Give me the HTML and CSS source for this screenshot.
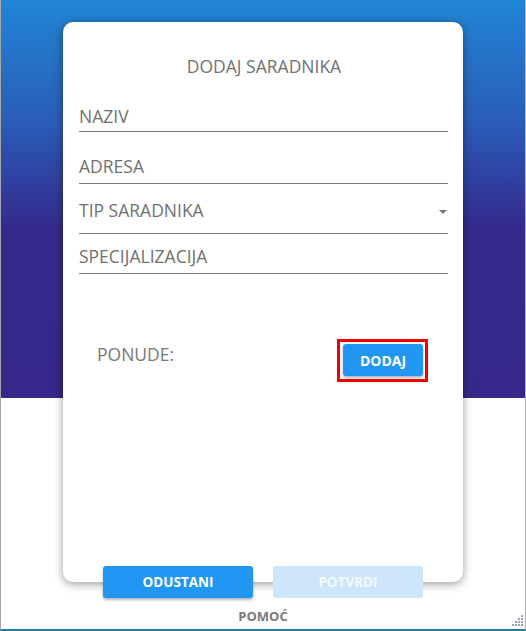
FILE: index.html
```html
<!DOCTYPE html>
<html>
<head>
<meta charset="utf-8">
<link rel="stylesheet" href="styles.css">
</head>
<body>
<div class="window">
  <div class="card">
    <div class="title">DODAJ SARADNIKA</div>
    <div class="field f1">NAZIV</div>
    <div class="field f2">ADRESA</div>
    <div class="field f3 select"><span>TIP SARADNIKA</span><span class="caret"></span></div>
    <div class="field f4">SPECIJALIZACIJA</div>
    <div class="offers">
      <span class="offers-label">PONUDE:</span>
      <div class="highlight"><button class="btn btn-primary btn-small">DODAJ</button></div>
    </div>
  </div>
  <div class="actions">
    <button class="btn btn-primary btn-wide">ODUSTANI</button>
    <button class="btn btn-disabled btn-wide">POTVRDI</button>
  </div>
  <div class="help">POMOĆ</div>
  <svg class="grip" width="12" height="12" viewBox="0 0 12 12">
    <g fill="#9aa3b5">
      <rect x="10" y="0" width="2" height="2"/>
      <rect x="7" y="3" width="2" height="2"/><rect x="10" y="3" width="2" height="2"/>
      <rect x="4" y="6" width="2" height="2"/><rect x="7" y="6" width="2" height="2"/><rect x="10" y="6" width="2" height="2"/>
      <rect x="1" y="9" width="2" height="2"/><rect x="4" y="9" width="2" height="2"/><rect x="7" y="9" width="2" height="2"/><rect x="10" y="9" width="2" height="2"/>
    </g>
  </svg>
</div>
</body>
</html>
```
FILE: styles.css
```css
* { box-sizing: border-box; }
html, body { margin: 0; padding: 0; }
body { font-family: "Open Sans", "Liberation Sans", sans-serif; }

.window {
  position: relative;
  width: 526px;
  height: 631px;
  border-left: 1px solid #a6a6a6;
  border-right: 1px solid #b9b9b9;
  border-bottom: 2px solid #1f7ea9;
  background: #fff linear-gradient(to bottom, #2185d4 0px, #2a5db9 120px, #35298c 230px, #35288a 398px) no-repeat top left / 100% 398px;
  overflow: hidden;
}

.card {
  margin: 22px 0 0 62px;
  width: 400px;
  height: 560px;
  background: #fff;
  border-radius: 10px;
  box-shadow: 0 2px 10px rgba(0, 0, 0, 0.4);
  padding: 34px 15px 0 16px;
  color: #6f6f6f;
}

.title {
  text-align: center;
  font-size: 17.5px;
  line-height: 20px;
  color: #727272;
  padding-left: 1px;
}

.field {
  font-size: 17.5px;
  line-height: 20px;
  color: #707070;
  border-bottom: 1px solid #7a7a7a;
}
.f1 { margin-top: 30px; padding-bottom: 5px; }
.f2 { margin-top: 24px; padding-bottom: 7px; }
.f3 { margin-top: 16px; padding-bottom: 13px; }
.f4 { margin-top: 12px; padding-bottom: 7px; }

.select {
  display: flex;
  justify-content: space-between;
  align-items: center;
}
.caret {
  width: 0;
  height: 0;
  border-left: 4px solid transparent;
  border-right: 4px solid transparent;
  border-top: 4px solid #777;
  margin-right: 1px;
  margin-top: 3px;
}

.offers {
  margin-top: 65px;
  display: flex;
  justify-content: space-between;
  align-items: center;
  padding: 0 20px 0 18px;
}
.offers-label {
  font-size: 17.5px;
  line-height: 20px;
  color: #777;
  margin-top: -14px;
}
.highlight {
  border: 3px solid #f00000;
  padding: 2px 2px 3px 3px;
  display: flex;
}

.btn {
  border: 0;
  border-radius: 3px;
  font-family: "Open Sans", "Liberation Sans", sans-serif;
  font-weight: 700;
  font-size: 13.5px;
  color: #fff;
  height: 32px;
  padding: 0;
}
.btn-primary {
  background: #2196f3;
  box-shadow: 0 2px 3px rgba(0, 0, 0, 0.3);
}
.btn-disabled {
  background: #cde6fb;
  color: #f4f9ff;
}
.btn-small { width: 80px; font-size: 14px; }
.btn-wide { width: 150px; }

.actions {
  position: relative;
  margin-top: -16px;
  display: flex;
  justify-content: center;
  gap: 20px;
}

.help {
  text-align: center;
  font-size: 13px;
  font-weight: 700;
  color: #7a7a7a;
  margin-top: 9px;
  line-height: 18px;
}

.grip {
  position: absolute;
  right: 2px;
  bottom: 2px;
}
```
